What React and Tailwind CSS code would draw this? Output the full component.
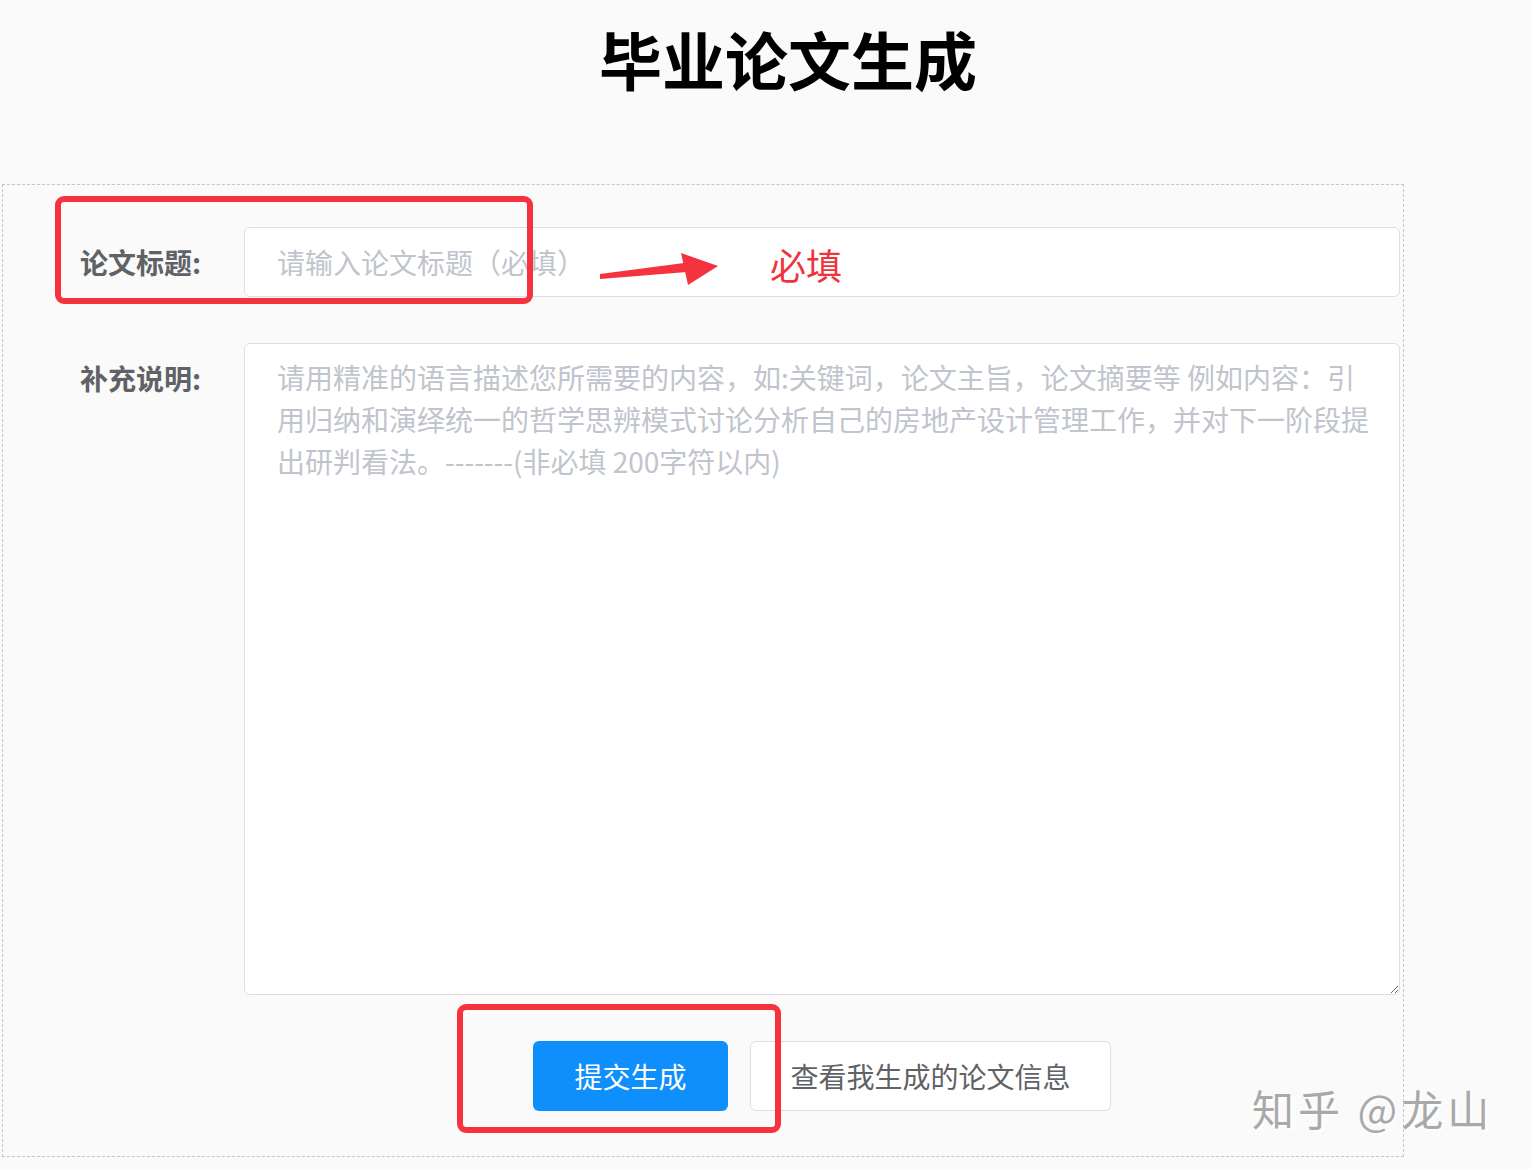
export default function App() {
  const font = { fontFamily: '"Noto Sans CJK SC", "Noto Sans", sans-serif' };

  return (
    <div className="relative min-h-screen bg-[#fafafa] text-[#303133]" style={font}>
      <h1 className="pt-[20px] pl-[44px] text-center text-[63px] font-bold leading-[76px] text-black">
        毕业论文生成
      </h1>

      <div className="mt-[88px] ml-[2px] w-[1402px] border border-dashed border-[#c6c6c6] pt-[42px] pb-[45px] pr-[3px]">
        {/* 论文标题 */}
        <div className="flex items-center">
          <label className="w-[241px] shrink-0 pl-[77px] text-[28px] font-bold text-[#606266]">
            论文标题:
          </label>
          <input
            type="text"
            placeholder="请输入论文标题（必填）"
            className="h-[70px] flex-1 rounded-[6px] border border-[#dcdfe6] bg-white px-[32px] text-[28px] text-[#606266] outline-none placeholder:text-[#c0c4cc]"
          />
        </div>

        {/* 补充说明 */}
        <div className="mt-[46px] flex items-start">
          <label className="w-[241px] shrink-0 pl-[77px] pt-[14px] text-[28px] font-bold leading-[42px] text-[#606266]">
            补充说明:
          </label>
          <textarea
            placeholder={
              '请用精准的语言描述您所需要的内容，如:关键词，论文主旨，论文摘要等 例如内容：引\n用归纳和演绎统一的哲学思辨模式讨论分析自己的房地产设计管理工作，并对下一阶段提\n出研判看法。-------(非必填 200字符以内)'
            }
            className="h-[652px] flex-1 rounded-[6px] border border-[#dcdfe6] bg-white pt-[12px] pl-[32px] pr-[10px] text-[28px] leading-[42px] text-[#606266] outline-none placeholder:text-[#c0c4cc]"
          />
        </div>

        {/* 按钮 */}
        <div className="mt-[46px] flex justify-center gap-[22px] pl-[241px]">
          <button className="h-[70px] w-[195px] rounded-[6px] bg-[#0f8ffb] text-[28px] text-white">
            提交生成
          </button>
          <button className="h-[70px] w-[361px] rounded-[6px] border border-[#dcdfe6] bg-white text-[28px] text-[#606266]">
            查看我生成的论文信息
          </button>
        </div>
      </div>

      {/* 标注 */}
      <div className="pointer-events-none absolute left-[55px] top-[196px] h-[108px] w-[478px] rounded-[9px] border-[6px] border-[#f5333f]" />
      <div className="pointer-events-none absolute left-[457px] top-[1004px] h-[129px] w-[324px] rounded-[9px] border-[6px] border-[#f5333f]" />
      <svg className="pointer-events-none absolute left-[598px] top-[248px]" width="124" height="42" viewBox="0 0 124 42">
        <polygon points="2,26 86,15 89,24 2,31" fill="#f5333f" />
        <polygon points="83,5 120,18 90,37" fill="#f5333f" />
      </svg>
      <div className="pointer-events-none absolute left-[770px] top-[240px] text-[36px] leading-[48px] text-[#f0323c]">
        必填
      </div>

      {/* 水印 */}
      <div
        className="pointer-events-none absolute left-[1252px] top-[1082px] text-[42px] leading-[52px] tracking-[4px] text-[#a9a9a9]"
        style={{ textShadow: '2px 2px 0 #ffffff' }}
      >
        知乎 @龙山
      </div>
    </div>
  );
}
